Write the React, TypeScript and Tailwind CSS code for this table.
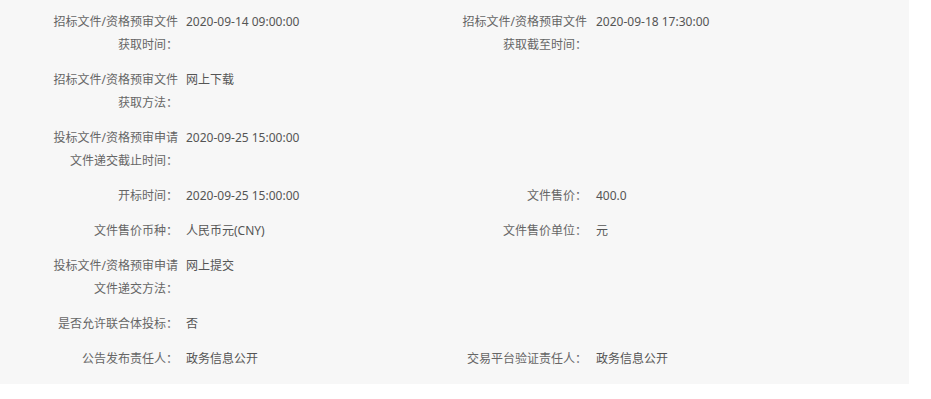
import React from "react";

type Cell = { label: string; value: string } | null;

const rows: [Cell, Cell][] = [
  [
    { label: "招标文件/资格预审文件获取时间：", value: "2020-09-14 09:00:00" },
    { label: "招标文件/资格预审文件获取截至时间：", value: "2020-09-18 17:30:00" },
  ],
  [{ label: "招标文件/资格预审文件获取方法：", value: "网上下载" }, null],
  [{ label: "投标文件/资格预审申请文件递交截止时间：", value: "2020-09-25 15:00:00" }, null],
  [
    { label: "开标时间：", value: "2020-09-25 15:00:00" },
    { label: "文件售价：", value: "400.0" },
  ],
  [
    { label: "文件售价币种：", value: "人民币元(CNY)" },
    { label: "文件售价单位：", value: "元" },
  ],
  [{ label: "投标文件/资格预审申请文件递交方法：", value: "网上提交" }, null],
  [{ label: "是否允许联合体投标：", value: "否" }, null],
  [
    { label: "公告发布责任人：", value: "政务信息公开" },
    { label: "交易平台验证责任人：", value: "政务信息公开" },
  ],
];

function Item({ cell, gap }: { cell: Cell; gap: string }) {
  if (!cell) return <div className="w-[409px]" />;
  return (
    <div className="flex w-[409px] items-start">
      <div className="w-[130px] shrink-0 text-right text-[#666]">{cell.label}</div>
      <div className={`${gap} text-[#555]`}>{cell.value}</div>
    </div>
  );
}

export default function App() {
  return (
    <div className="bg-white">
      <div
        className="w-[909px] bg-[#f7f7f7] pl-[48px] pt-[4px] pb-[8px] text-[12px] leading-[23px]"
        style={{ fontFamily: '"Noto Sans", "Noto Sans CJK SC", sans-serif' }}
      >
        {rows.map((r, i) => (
          <div key={i} className="flex py-[6px]">
            <Item cell={r[0]} gap="pl-[8px]" />
            <Item cell={r[1]} gap="pl-[9px]" />
          </div>
        ))}
      </div>
    </div>
  );
}
